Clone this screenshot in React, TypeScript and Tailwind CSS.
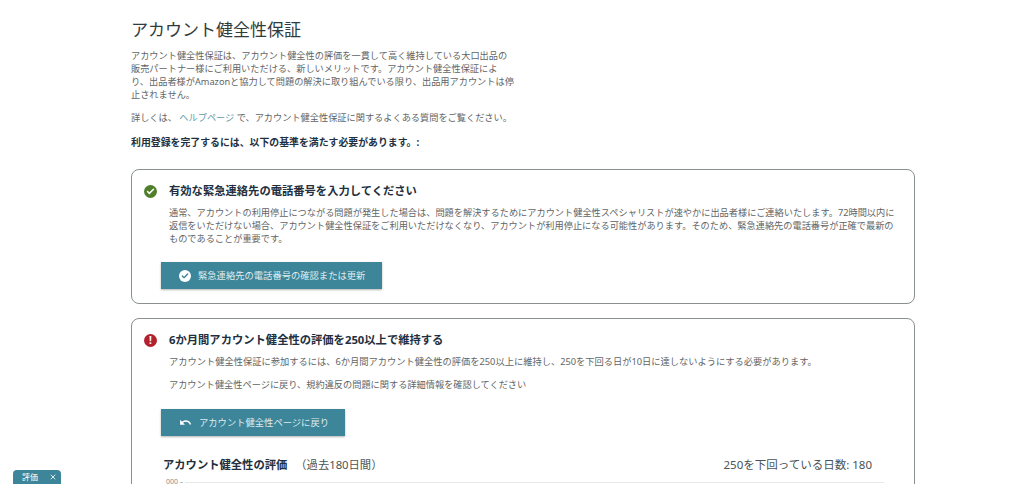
import React from 'react';
import { Check, X } from 'lucide-react';

const FONT = "font-['Noto_Sans','Noto_Sans_CJK_JP',sans-serif]";

const Requirement = ({ icon, title, children }: { icon: React.ReactNode; title: string; children: React.ReactNode }) => (
  <div className="w-[784px] rounded-[8px] border border-[#8a8f8f] bg-white pl-[12px] pt-[12px]">
    <div className="flex items-center gap-[12px] h-[18px]">
      {icon}
      <h2 className="text-[11.3px] font-bold leading-[18px] text-[#232f3e]">{title}</h2>
    </div>
    {children}
  </div>
);

const TealButton = ({ icon, label, width }: { icon: React.ReactNode; label: string; width: string }) => (
  <div className={`${width} flex h-[27px] items-center gap-[7px] bg-[#3d8599] pl-[18px] text-[9.3px] text-[#dfecef] shadow-[0_1px_2px_rgba(0,0,0,0.3)]`}>
    {icon}
    <span>{label}</span>
  </div>
);

export default function App() {
  return (
    <div className={`${FONT} relative h-[484px] w-[1024px] overflow-hidden bg-white pl-[131px] pt-[18px]`}>
      <h1 className="text-[17px] font-normal leading-[24px] text-[#2f3b3d]">アカウント健全性保証</h1>

      <p className="mt-[7px] w-[384px] text-[9.2px] leading-[13px] text-[#5f6566]">
        アカウント健全性保証は、アカウント健全性の評価を一貫して高く維持している大口出品の販売パートナー様にご利用いただける、新しいメリットです。アカウント健全性保証により、出品者様がAmazonと協力して問題の解決に取り組んでいる限り、出品用アカウントは停止されません。
      </p>
      <p className="mt-[10px] text-[9.2px] leading-[13px] text-[#5f6566]">
        詳しくは、 <span className="text-[#5f9cac]">ヘルプページ</span> で、アカウント健全性保証に関するよくある質問をご覧ください。
      </p>
      <p className="mt-[12px] text-[9.9px] font-bold leading-[13px] text-[#232f3e]">
        利用登録を完了するには、以下の基準を満たす必要があります。:
      </p>

      <div className="mt-[20px] flex flex-col gap-[14px]">
        <Requirement
          title="有効な緊急連絡先の電話番号を入力してください"
          icon={
            <span className="flex h-[13px] w-[13px] items-center justify-center rounded-full bg-[#4f7f2a]">
              <Check className="h-[9px] w-[9px] text-white" strokeWidth={4} />
            </span>
          }
        >
          <p className="ml-[25px] mt-[6px] w-[729px] text-[9.2px] leading-[13px] text-[#5f6566]">
            通常、アカウントの利用停止につながる問題が発生した場合は、問題を解決するためにアカウント健全性スペシャリストが速やかに出品者様にご連絡いたします。72時間以内に返信をいただけない場合、アカウント健全性保証をご利用いただけなくなり、アカウントが利用停止になる可能性があります。そのため、緊急連絡先の電話番号が正確で最新のものであることが重要です。
          </p>
          <div className="ml-[17px] mt-[17px] pb-[14px]">
            <TealButton
              width="w-[221px]"
              label="緊急連絡先の電話番号の確認または更新"
              icon={
                <span className="flex h-[12px] w-[12px] items-center justify-center rounded-full bg-white">
                  <Check className="h-[8px] w-[8px] text-[#3d8599]" strokeWidth={4} />
                </span>
              }
            />
          </div>
        </Requirement>

        <Requirement
          title="6か月間アカウント健全性の評価を250以上で維持する"
          icon={
            <span className="flex h-[13px] w-[13px] items-center justify-center rounded-full bg-[#b3202f] text-[10px] font-bold leading-none text-white">
              !
            </span>
          }
        >
          <p className="ml-[25px] mt-[6px] text-[9.25px] leading-[13px] text-[#5f6566]">
            アカウント健全性保証に参加するには、6か月間アカウント健全性の評価を250以上に維持し、250を下回る日が10日に達しないようにする必要があります。
          </p>
          <p className="ml-[25px] mt-[10px] text-[9.2px] leading-[13px] text-[#5f6566]">
            アカウント健全性ページに戻り、規約違反の問題に関する詳細情報を確認してください
          </p>
          <div className="ml-[17px] mt-[18px]">
            <TealButton
              width="w-[184px]"
              label="アカウント健全性ページに戻り"
              icon={
                <svg viewBox="0 0 24 24" className="h-[13px] w-[13px] fill-white">
                  <path d="M12.5 8c-2.65 0-5.05.99-6.9 2.6L2 7v9h9l-3.62-3.62c1.39-1.16 3.16-1.88 5.12-1.88 3.54 0 6.55 2.31 7.6 5.5l2.37-.78C21.08 11.03 17.15 8 12.5 8z" />
                </svg>
              }
            />
          </div>
          <div className="ml-[19px] mr-[42px] mt-[20px] flex items-center justify-between">
            <div className="text-[11.3px] leading-[18px] text-[#232f3e]">
              <span className="font-bold">アカウント健全性の評価</span>
              <span className="ml-[8px] text-[#4a5455]">（過去180日間）</span>
            </div>
            <span className="text-[11.5px] leading-[18px] text-[#4a5455]">250を下回っている日数: 180</span>
          </div>
          <div className="ml-[22px] mr-[30px] mt-[5px] flex items-center gap-[2px] pb-[40px]">
            <span className="text-[7px] leading-[6px] text-[#8a8f8f]">000 –</span>
            <div className="h-px flex-1 bg-[#e8e8e8]" />
          </div>
        </Requirement>
      </div>

      <div className="absolute bottom-0 left-[13px] flex h-[14px] w-[48px] items-center justify-between rounded-t-[4px] bg-[#3d8599] pl-[9px] pr-[4px] text-[8px] text-white">
        <span>評価</span>
        <X className="h-[8px] w-[8px]" strokeWidth={2.5} />
      </div>
    </div>
  );
}
